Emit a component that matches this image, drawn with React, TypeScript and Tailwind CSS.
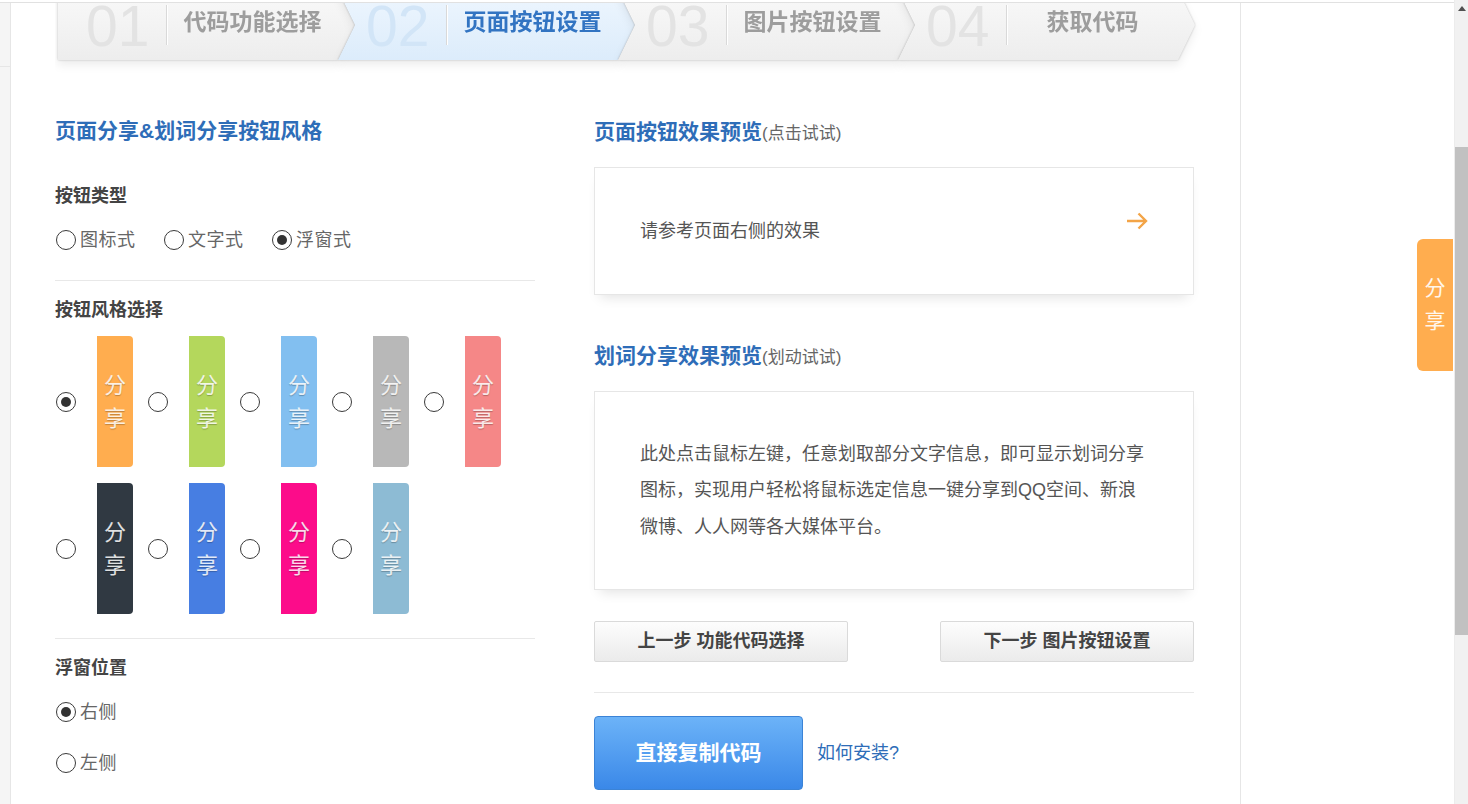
import React from 'react';

const steps = [
  { num: '01', label: '代码功能选择', active: false },
  { num: '02', label: '页面按钮设置', active: true },
  { num: '03', label: '图片按钮设置', active: false },
  { num: '04', label: '获取代码', active: false },
];

const styleRows = [
  ['bg-[#ffad4f]', 'bg-[#b4d75c]', 'bg-[#82bff0]', 'bg-[#b8b8b8]', 'bg-[#f58787]'],
  ['bg-[#303942]', 'bg-[#477ee2]', 'bg-[#fc0c8a]', 'bg-[#8dbbd4]'],
];

const Radio = ({ checked = false }: { checked?: boolean }) => (
  <span className="flex h-[20px] w-[20px] shrink-0 items-center justify-center rounded-full border border-[#3a3a3a] bg-white">
    {checked && <span className="h-[10px] w-[10px] rounded-full bg-[#333]" />}
  </span>
);

const RadioLabel = ({ label, checked = false, className = '' }: { label: string; checked?: boolean; className?: string }) => (
  <label className={`flex h-[26px] items-center pl-px ${className}`}>
    <Radio checked={checked} />
    <span className="ml-[4px] text-[18px] leading-[26px] tracking-[0.5px] text-[#666]">{label}</span>
  </label>
);

const StepBar = () => (
  <div className="h-[70px] overflow-hidden pl-[3px]">
    <div className="-mt-[13px] flex">
      {steps.map((step, i) => (
        <div
          key={step.num}
          className="relative -mr-[17px] h-[70px] w-[297px] [filter:drop-shadow(0_0_1px_rgba(0,0,0,0.22))_drop-shadow(0_5px_4px_rgba(0,0,0,0.07))]"
        >
          <div
            className={`flex h-full items-start ${
              i === 0
                ? '[clip-path:polygon(0_0,280px_0,297px_35px,280px_70px,0_70px)]'
                : '[clip-path:polygon(0_0,280px_0,297px_35px,280px_70px,0_70px,17px_35px)]'
            } ${step.active ? 'bg-linear-to-b from-[#eef6fe] to-[#dcecfb]' : 'bg-linear-to-b from-[#f9f9f9] to-[#ededed]'}`}
          >
            <div className="mt-[14px] w-[108px] pl-[28px]">
              <span
                className={`block font-['Liberation_Sans',sans-serif] text-[57px] leading-[44px] ${
                  step.active ? 'text-[#d2e5f7]' : 'text-[#e3e3e3]'
                }`}
              >
                {step.num}
              </span>
            </div>
            <div className="mt-[15px] h-[40px] w-px bg-[#d9d9d9] shadow-[1px_0_0_#ffffff]" />
            <div
              className={`mt-[17px] flex-1 pr-[17px] text-center text-[23px] font-bold leading-[30px] ${
                step.active ? 'text-[#3274c2]' : 'text-[#9d9d9d]'
              }`}
            >
              {step.label}
            </div>
          </div>
        </div>
      ))}
    </div>
  </div>
);

const ShareTab = ({ color }: { color: string }) => (
  <div className={`flex h-[131px] w-[36px] items-center justify-center rounded-r-[4px] ${color}`}>
    <span className="flex flex-col text-center text-[22px] leading-[33px] text-white/85 [text-shadow:0_1px_1px_rgba(0,0,0,0.25)]">
      <span>分</span>
      <span>享</span>
    </span>
  </div>
);

const Divider = ({ className = '' }: { className?: string }) => (
  <div className={`h-0 border-t border-[#e8e8e8] ${className}`} />
);

export default function App() {
  return (
    <div className="relative flex h-screen w-full overflow-hidden bg-white font-['Liberation_Sans','Noto_Sans_CJK_SC',sans-serif]">
      <div className="flex w-[1454px] flex-col">
        <div className="h-[2px]" />
        <div className="h-px bg-[#e1e1e1]" />
        <div className="flex flex-1">
          <div className="w-[11px] border-r border-[#e6e6e6] bg-[#f5f5f5]">
            <div className="h-[64px] border-b border-[#e6e6e6]" />
          </div>

          <main className="w-[1230px] border-r border-[#e6e6e6] pl-[44px]">
            <StepBar />

            <div className="flex gap-[59px] pt-[44px]">
              {/* left column */}
              <div className="w-[480px]">
                <h2 className="h-[28px] text-[21px] font-bold leading-[28px] text-[#2e6db8]">页面分享&amp;划词分享按钮风格</h2>

                <h3 className="mt-[38px] h-[26px] text-[18px] font-bold leading-[26px] text-[#444]">按钮类型</h3>
                <div className="mt-[18px] flex">
                  <RadioLabel label="图标式" className="w-[108px]" />
                  <RadioLabel label="文字式" className="w-[108px]" />
                  <RadioLabel label="浮窗式" checked />
                </div>

                <Divider className="mt-[27px]" />

                <h3 className="mt-[16px] h-[26px] text-[18px] font-bold leading-[26px] text-[#444]">按钮风格选择</h3>
                <div className="mt-[13px] flex flex-col gap-[16px]">
                  {styleRows.map((row, r) => (
                    <div key={r} className="flex items-center pl-px">
                      {row.map((color, i) => (
                        <div key={color} className={`flex items-center ${i > 0 ? 'ml-[15px]' : ''}`}>
                          <Radio checked={r === 0 && i === 0} />
                          <span className="ml-[21px]">
                            <ShareTab color={color} />
                          </span>
                        </div>
                      ))}
                    </div>
                  ))}
                </div>

                <Divider className="mt-[24px]" />

                <h3 className="mt-[16px] h-[26px] text-[18px] font-bold leading-[26px] text-[#444]">浮窗位置</h3>
                <div className="mt-[18px]">
                  <RadioLabel label="右侧" checked />
                </div>
                <div className="mt-[25px]">
                  <RadioLabel label="左侧" />
                </div>
              </div>

              {/* right column */}
              <div className="w-[600px]">
                <h2 className="mt-px flex h-[28px] items-baseline leading-[28px]">
                  <span className="text-[21px] font-bold text-[#2e6db8]">页面按钮效果预览</span>
                  <span className="text-[17px] text-[#666]">(点击试试)</span>
                </h2>
                <div className="mt-[21px] flex h-[128px] items-center justify-between border border-[#e6e6e6] px-[45px] shadow-[0_8px_12px_-6px_rgba(0,0,0,0.12)]">
                  <span className="text-[18px] leading-[26px] text-[#555]">请参考页面右侧的效果</span>
                  <svg width="22" height="18" viewBox="0 0 22 18" className="-mt-[20px]">
                    <path d="M1 9H20M12.5 1.5L20 9L12.5 16.5" fill="none" stroke="#f3a447" strokeWidth="2.4" />
                  </svg>
                </div>

                <h2 className="mt-[47px] flex h-[28px] items-baseline leading-[28px]">
                  <span className="text-[21px] font-bold text-[#2e6db8]">划词分享效果预览</span>
                  <span className="text-[17px] text-[#666]">(划动试试)</span>
                </h2>
                <div className="mt-[21px] flex h-[199px] items-center border border-[#e6e6e6] px-[45px] shadow-[0_8px_12px_-6px_rgba(0,0,0,0.12)]">
                  <p className="whitespace-nowrap text-[18px] leading-[36.5px] text-[#555]">
                    <span className="block">此处点击鼠标左键，任意划取部分文字信息，即可显示划词分享</span>
                    <span className="block">图标，实现用户轻松将鼠标选定信息一键分享到QQ空间、新浪</span>
                    <span className="block">微博、人人网等各大媒体平台。</span>
                  </p>
                </div>

                <div className="mt-[31px] flex justify-between">
                  <button className="h-[41px] w-[254px] rounded-[2px] border border-[#dadada] bg-linear-to-b from-[#fdfdfd] to-[#ebebeb] text-[18px] font-bold text-[#444]">
                    上一步 功能代码选择
                  </button>
                  <button className="h-[41px] w-[254px] rounded-[2px] border border-[#dadada] bg-linear-to-b from-[#fdfdfd] to-[#ebebeb] text-[18px] font-bold text-[#444]">
                    下一步 图片按钮设置
                  </button>
                </div>

                <Divider className="mt-[30px]" />

                <div className="mt-[23px] flex items-center">
                  <button className="h-[74px] w-[209px] rounded-[4px] border border-[#3b83d6] bg-linear-to-b from-[#6cb3f8] to-[#3a88e8] text-[21px] font-bold text-white">
                    直接复制代码
                  </button>
                  <a className="ml-[14px] text-[18px] leading-[26px] text-[#2e6db8]">如何安装?</a>
                </div>
              </div>
            </div>
          </main>

          <div className="flex-1" />
        </div>
      </div>

      {/* scrollbar */}
      <div className="flex w-[14px] flex-col border-l border-[#ececec] bg-[#f1f1f1]">
        <div className="flex h-[17px] items-center justify-center">
          <svg width="8" height="5" viewBox="0 0 8 5">
            <path d="M0 5L4 0L8 5Z" fill="#505050" />
          </svg>
        </div>
        <div className="h-[130px]" />
        <div className="h-[488px] bg-[#c1c1c1]" />
      </div>

      {/* floating share tab */}
      <div className="absolute right-[15px] top-[239px] flex h-[132px] w-[36px] items-center justify-center rounded-l-[6px] bg-[#ffad4f]">
        <span className="-mt-[2px] flex flex-col text-center text-[21px] leading-[33px] text-white/90">
          <span>分</span>
          <span>享</span>
        </span>
      </div>
    </div>
  );
}
